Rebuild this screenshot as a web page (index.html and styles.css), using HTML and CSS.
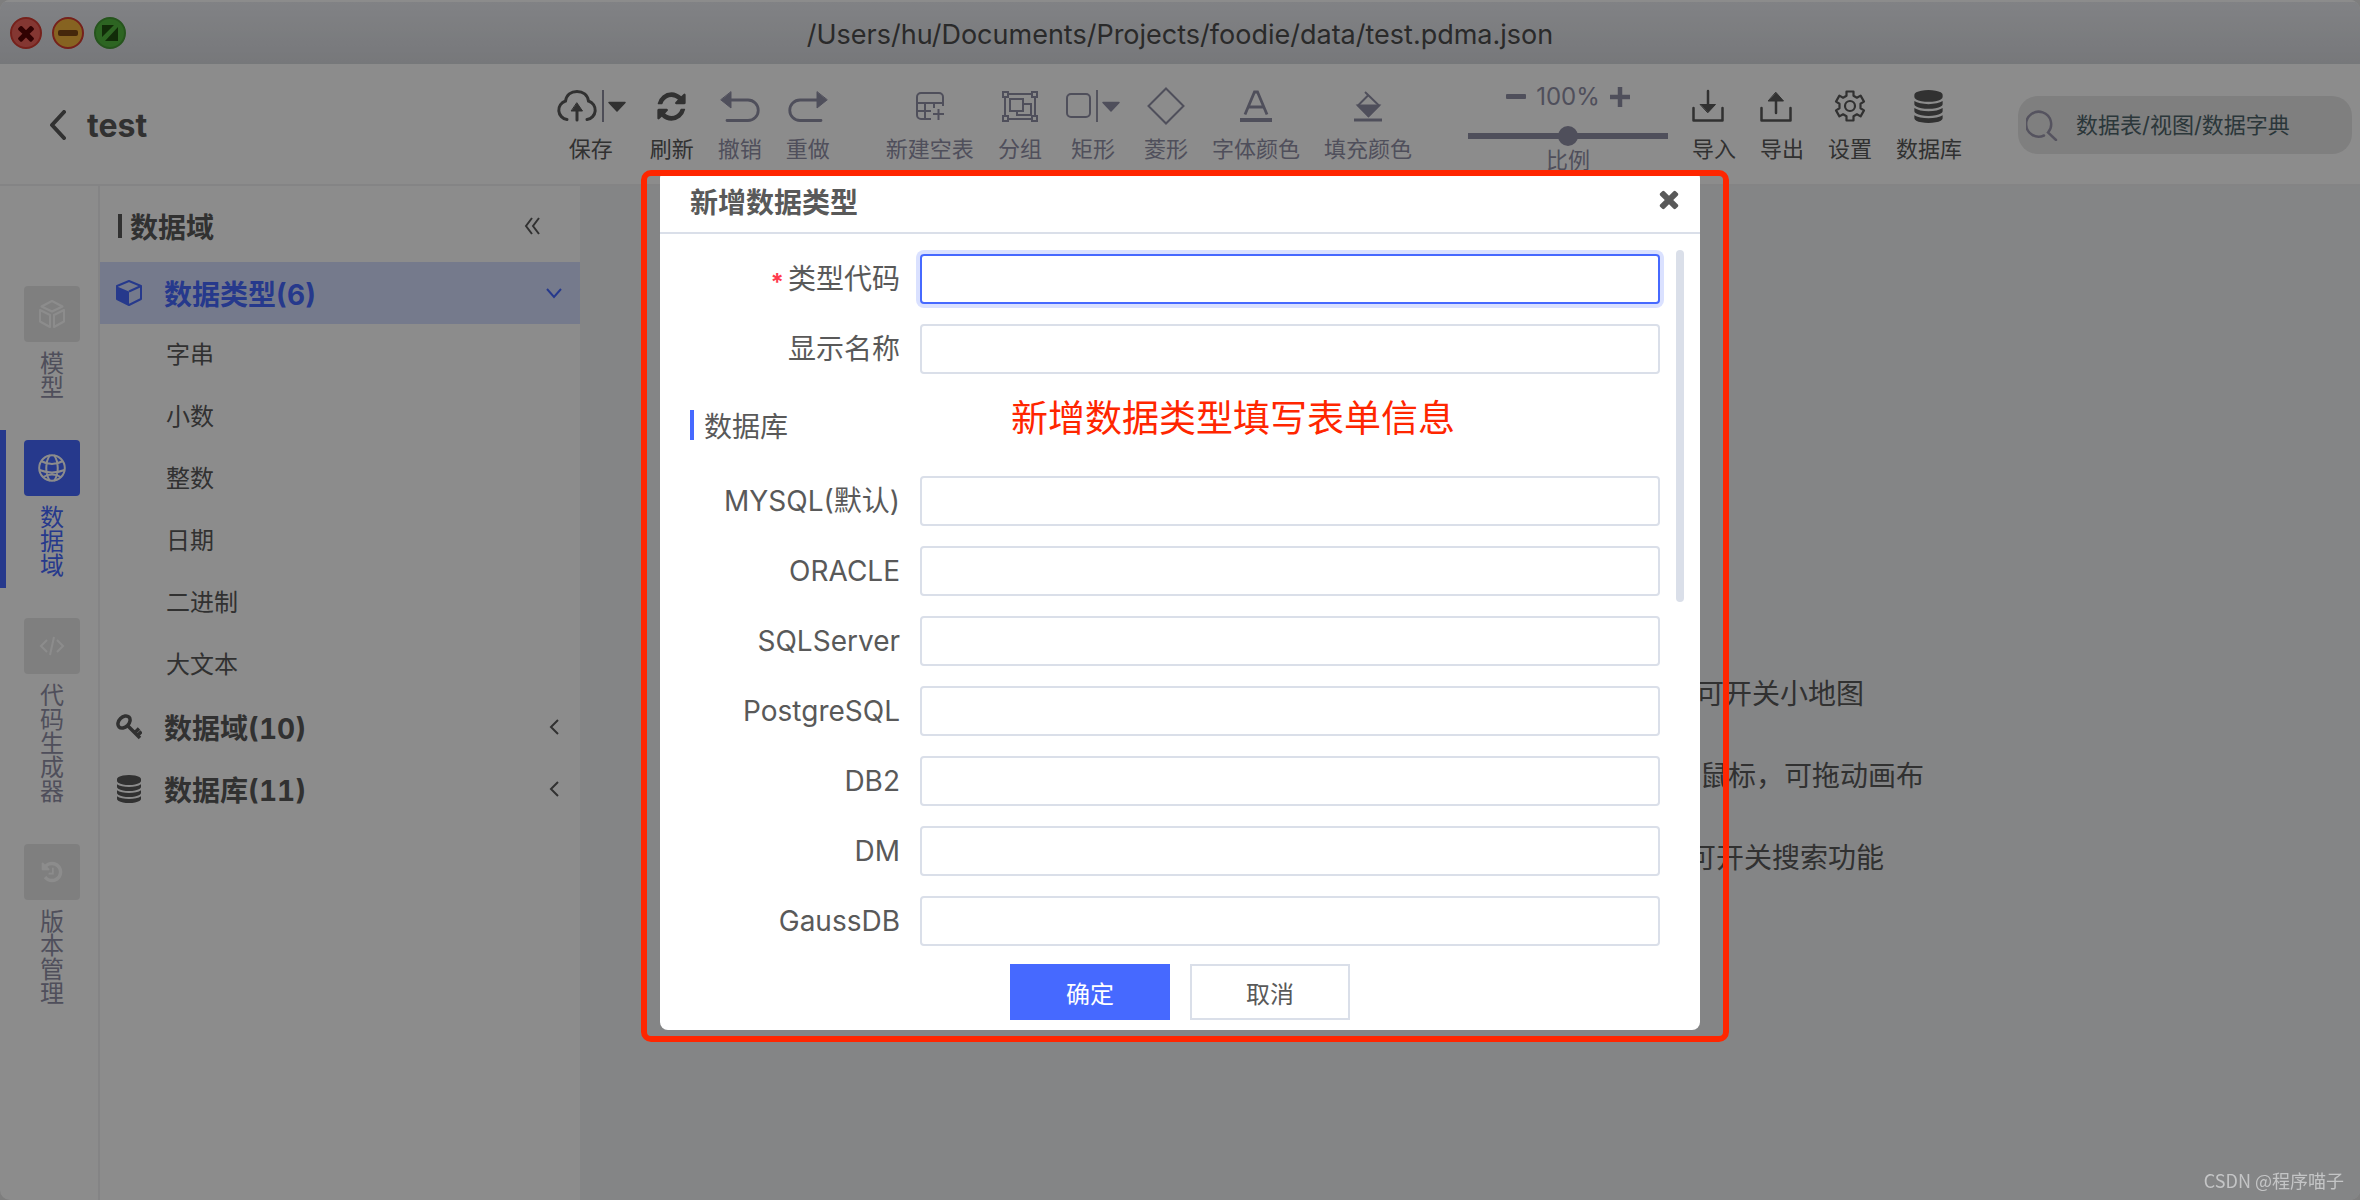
FILE: index.html
```html
<!DOCTYPE html>
<html lang="zh-CN">
<head>
<meta charset="utf-8">
<title>test - 数据域</title>
<link rel="stylesheet" href="styles.css">
</head>
<body>
<svg class="sprite" aria-hidden="true">
  <symbol id="i-db" viewBox="0 0 1792 1792"><path fill="currentColor" d="M896 768q237 0 443-43t325-127v170q0 69-103 128t-280 93.5-385 34.5-385-34.5-280-93.5-103-128v-170q119 84 325 127t443 43zm0 768q237 0 443-43t325-127v170q0 69-103 128t-280 93.5-385 34.5-385-34.5-280-93.5-103-128v-170q119 84 325 127t443 43zm0-384q237 0 443-43t325-127v170q0 69-103 128t-280 93.5-385 34.5-385-34.5-280-93.5-103-128v-170q119 84 325 127t443 43zm0-1152q208 0 385 34.5t280 93.5 103 128v128q0 69-103 128t-280 93.5-385 34.5-385-34.5-280-93.5-103-128v-128q0-69 103-128t280-93.5 385-34.5z"/></symbol>
  <symbol id="i-close" viewBox="0 0 1792 1792"><path fill="currentColor" d="M1490 1322q0 40-28 68l-136 136q-28 28-68 28t-68-28l-294-294-294 294q-28 28-68 28t-68-28l-136-136q-28-28-28-68t28-68l294-294-294-294q-28-28-28-68t28-68l136-136q28-28 68-28t68 28l294 294 294-294q28-28 68-28t68 28l136 136q28 28 28 68t-28 68l-294 294 294 294q28 28 28 68z"/></symbol>
</svg>

<div class="window">
  <header class="titlebar">
    <div class="lights">
      <button class="light light-close" aria-label="关闭窗口"><svg width="24" height="24"><use href="#i-close"/></svg></button>
      <button class="light light-min" aria-label="最小化"><svg width="20" height="6"><rect width="20" height="6" rx="2" fill="currentColor"/></svg></button>
      <button class="light light-max" aria-label="全屏"><svg width="16" height="16" viewBox="0 0 16 16" fill="currentColor"><path d="M0 0h12L0 12zM16 2v14H3z"/></svg></button>
    </div>
    <h1 class="path">/Users/hu/Documents/Projects/foodie/data/test.pdma.json</h1>
  </header>

  <div class="topbar">
    <div class="brand">
      <button class="back" aria-label="返回"><svg width="18" height="30" viewBox="0 0 18 30" fill="none" stroke="currentColor" stroke-width="4" stroke-linecap="round" stroke-linejoin="round"><path d="M15 2L3 15l12 13"/></svg></button>
      <h2 class="project">test</h2>
    </div>
    <nav class="toolbar">
      <button class="tool"><span class="tool-icon"><svg width="70" height="36" viewBox="0 0 70 36" fill="none" stroke="currentColor" stroke-width="3" stroke-linecap="round"><path d="M11 31.500A9.500 9.500 0 0 1 9.500 13C10.500 7 15 3.500 21 3.500S31.500 7 32.500 13A9.500 9.500 0 0 1 31 31.500"/><path d="M21 32V21"/><path d="M21 15l5.500 8h-11z" fill="currentColor" stroke-width="1"/><path d="M47 2v32" stroke="#8c8c9e" stroke-width="2" stroke-linecap="butt"/><path d="M53 14.500h16L61 23z" fill="currentColor" stroke-width="1.500" stroke-linejoin="round"/></svg></span><span>保存</span></button>
      <button class="tool"><span class="tool-icon"><svg width="33" height="33" viewBox="0 0 1792 1792"><path fill="currentColor" d="M1639 1056q0 5-1 7-64 268-268 434.500t-478 166.500q-146 0-282.500-55t-243.500-157l-129 129q-19 19-45 19t-45-19-19-45v-448q0-26 19-45t45-19h448q26 0 45 19t19 45-19 45l-137 137q71 66 161 102t187 36q134 0 250-65t186-179q11-17 53-117 8-23 30-23h192q13 0 22.500 9.500t9.500 22.500zm25-800v448q0 26-19 45t-45 19h-448q-26 0-45-19t-19-45 19-45l138-138q-148-137-349-137-134 0-250 65t-186 179q-11 17-53 117-8 23-30 23h-199q-13 0-22.500-9.500t-9.500-22.500v-7q65-268 270-434.500t480-166.500q146 0 284 55.500t245 156.500l130-129q19-19 45-19t45 19 19 45z"/></svg></span><span>刷新</span></button>
      <button class="tool muted"><span class="tool-icon"><svg width="40" height="34" viewBox="0 0 40 34" fill="none" stroke="currentColor" stroke-width="2.800" stroke-linecap="round"><path d="M9 11h19a10.200 10.200 0 0 1 0 20.500H7"/><path d="M11 3v16L1 11z" fill="currentColor" stroke-width="1"/></svg></span><span>撤销</span></button>
      <button class="tool muted"><span class="tool-icon"><svg width="40" height="34" viewBox="0 0 40 34" fill="none" stroke="currentColor" stroke-width="2.800" stroke-linecap="round"><path d="M31 11H12a10.200 10.200 0 0 0 0 20.500h21"/><path d="M29 3v16l10-8z" fill="currentColor" stroke-width="1"/></svg></span><span>重做</span></button>
      <button class="tool muted group-start"><span class="tool-icon"><svg width="28" height="28" viewBox="0 0 28 28" fill="none" stroke="currentColor" stroke-width="2"><path d="M27 14V5a4 4 0 0 0-4-4H5a4 4 0 0 0-4 4v18a4 4 0 0 0 4 4h10M1 11h26M1 19h14M9 11v16M18 11v5M17 22h11M22.500 17v11"/></svg></span><span>新建空表</span></button>
      <button class="tool muted"><span class="tool-icon"><svg width="38" height="34" viewBox="0 0 38 34" fill="none" stroke="currentColor" stroke-width="2"><path d="M7 5h24M7 30h24M4 8v19M34 8v19"/><path d="M2 3h5v5H2zM31 3h5v5h-5zM2 27h5v5H2zM31 27h5v5h-5zM9 10h13v12H9zM22 15h8v11H16v-4"/></svg></span><span>分组</span></button>
      <button class="tool muted"><span class="tool-icon"><svg width="54" height="34" viewBox="0 0 54 34" fill="none" stroke="currentColor"><rect x="1" y="5" width="23" height="23" rx="4" stroke-width="2"/><path d="M31 1v32" stroke="#9a9aac" stroke-width="2"/><path d="M37 13.500h16L45 22z" fill="currentColor" stroke-width="1.500" stroke-linejoin="round"/></svg></span><span>矩形</span></button>
      <button class="tool muted"><span class="tool-icon"><svg width="38" height="38" viewBox="0 0 38 38" fill="none" stroke="currentColor" stroke-width="2"><path d="M19 1.500L36.500 19 19 36.500 1.500 19z"/></svg></span><span>菱形</span></button>
      <button class="tool muted"><span class="tool-icon"><svg width="32" height="32" viewBox="0 0 32 32" fill="none" stroke="currentColor" stroke-width="2.800"><path d="M5 24.500L14.500 2h3L27 24.500M8.500 17h15"/><path d="M0 30h32" stroke-width="4"/></svg></span><span>字体颜色</span></button>
      <button class="tool muted"><span class="tool-icon"><svg width="28" height="32" viewBox="0 0 28 32" fill="none" stroke="currentColor" stroke-width="2"><path d="M11 2l14 13.500L14.500 26 4 15.500 14.500 5"/><path d="M4 15.500h21L14.500 26z" fill="currentColor"/><path d="M0 30h28" stroke-width="3"/></svg></span><span>填充颜色</span></button>
      <div class="zoom muted group-start">
        <div class="zoom-row">
          <button aria-label="缩小"><svg width="20" height="20" viewBox="0 0 20 20"><rect x="0" y="7" width="20" height="5" rx="1" fill="currentColor"/></svg></button>
          <span>100%</span>
          <button aria-label="放大"><svg width="20" height="20" viewBox="0 0 20 20"><path d="M8 0h4v8h8v4h-8v8H8v-8H0V8h8z" fill="currentColor" stroke="currentColor" stroke-width="0.500"/></svg></button>
        </div>
        <input id="zoom-range" class="zoom-range" type="range" min="0" max="200" value="100">
        <label for="zoom-range">比例</label>
      </div>
      <button class="tool"><span class="tool-icon"><svg width="44" height="34" viewBox="0 0 44 34" fill="none" stroke="currentColor" stroke-width="2.500" stroke-linecap="round" stroke-linejoin="round"><path d="M1.500 19v12.500h29V19M16 2v14"/><path d="M8.500 15.500h15L16 23.500z" fill="currentColor" stroke-width="1"/></svg></span><span>导入</span></button>
      <button class="tool"><span class="tool-icon"><svg width="44" height="34" viewBox="0 0 44 34" fill="none" stroke="currentColor" stroke-width="2.500" stroke-linecap="round" stroke-linejoin="round"><path d="M1.500 19v12.500h29V19M16 24V10"/><path d="M8.500 12h15L16 3.500z" fill="currentColor" stroke-width="1"/></svg></span><span>导出</span></button>
      <button class="tool"><span class="tool-icon"><svg width="32" height="32" viewBox="0 0 32 32" fill="none" stroke="currentColor" stroke-width="2.200" stroke-linejoin="round"><path d="M12.500 1.500h7v4.200l3.400 2 3.700-2.100 3.400 6-3.500 2.100v4.600l3.500 2.100-3.400 6-3.700-2.100-3.400 2v4.200h-7v-4.200l-3.400-2-3.700 2.100-3.400-6 3.500-2.100v-4.600L2 11.600l3.400-6 3.700 2.100 3.400-2z"/><circle cx="16" cy="16" r="5"/></svg></span><span>设置</span></button>
      <button class="tool"><span class="tool-icon"><svg width="33" height="33"><use href="#i-db"/></svg></span><span>数据库</span></button>
    </nav>
    <label class="search">
      <svg width="32" height="32" viewBox="0 0 32 32" fill="none" stroke="currentColor" stroke-width="2.500" stroke-linecap="round"><path d="M18 26.500A12.500 12.500 0 1 1 22 23.500L30 31"/></svg>
      <input type="text" placeholder="数据表/视图/数据字典" aria-label="搜索">
    </label>
  </div>

  <div class="workspace">
    <nav class="rail">
      <a class="rail-item" href="#model"><span class="rail-icon"><svg width="28" height="30" viewBox="0 0 28 30" fill="none" stroke="currentColor" stroke-width="2" stroke-linejoin="round"><path d="M14 2l10.500 5.500L14 12.500 3.500 7.500zM2 11l10 5v12L2 22.500zM26 11l-10 5v12l10-5.500z"/></svg></span><span class="rail-text">模型</span></a>
      <a class="rail-item active" href="#domain"><span class="rail-icon"><svg width="28" height="28" viewBox="0 0 28 28" fill="none" stroke="currentColor" stroke-width="2"><circle cx="14" cy="14" r="12.800"/><path d="M12 1C7 8 7 20 12 27M16 1c5 7 5 19 0 26M3 7q11 6 22 0M1.500 16q12.500 5 25 0M5 23q9-5 18 0"/></svg></span><span class="rail-text">数据域</span></a>
      <a class="rail-item" href="#code"><span class="rail-icon"><svg width="26" height="20" viewBox="0 0 26 20" fill="none" stroke="currentColor" stroke-width="2"><path d="M8 4L2 10l6 6M18 4l6 6-6 6M15 1l-4 18"/></svg></span><span class="rail-text">代码生成器</span></a>
      <a class="rail-item" href="#version"><span class="rail-icon"><svg width="24" height="24" viewBox="0 0 1792 1792"><path fill="currentColor" d="M1664 896q0 156-61 298t-164 245-245 164-298 61q-172 0-327-72.500t-264-204.500q-7-10-6.500-22.500t8.500-20.500l137-138q10-9 25-9 16 2 23 12 73 95 179 147t225 52q104 0 198.500-40.500t163.500-109.500 109.500-163.500 40.500-198.500-40.500-198.500-109.500-163.500-163.500-109.500-198.500-40.500q-98 0-188 35.500t-160 101.500l137 138q31 30 14 69-17 40-59 40h-448q-26 0-45-19t-19-45v-448q0-42 40-59 39-17 69 14l130 129q107-101 244.500-156.500t284.500-55.500q156 0 298 61t245 164 164 245 61 298zm-640-288v448q0 14-9 23t-23 9h-320q-14 0-23-9t-9-23v-64q0-14 9-23t23-9h224v-352q0-14 9-23t23-9h64q14 0 23 9t9 23z"/></svg></span><span class="rail-text">版本管理</span></a>
    </nav>

    <aside class="panel">
      <div class="panel-head">
        <h3 class="panel-title">数据域</h3>
        <button aria-label="收起"><svg width="16" height="18" viewBox="0 0 16 18" fill="none" stroke="currentColor" stroke-width="2"><path d="M8 1L2 9l6 8M15 1L9 9l6 8"/></svg></button>
      </div>
      <button class="node selected">
        <svg class="node-icon" viewBox="0 0 26 26"><path d="M13 1l12 5v13l-12 6-12-6V6z" fill="none" stroke="currentColor" stroke-width="2" stroke-linejoin="round"/><path d="M1 6.500l12 5V25L1 19z" fill="currentColor"/><path d="M13 11.500L25 6" stroke="currentColor" stroke-width="2"/></svg>
        <span>数据类型(6)</span>
        <svg class="node-arrow" viewBox="0 0 16 16" fill="none" stroke="currentColor" stroke-width="2"><path d="M1 4l7 8 7-8"/></svg>
      </button>
      <ul class="leaves">
        <li>字串</li><li>小数</li><li>整数</li><li>日期</li><li>二进制</li><li>大文本</li>
      </ul>
      <button class="node">
        <svg class="node-icon" viewBox="0 0 26 26" fill="none" stroke="currentColor"><ellipse cx="8" cy="8" rx="7" ry="5" transform="rotate(-45 8 8)" stroke-width="3.500"/><path d="M11.500 11.500L24 24M19 18.500l4-4M21.500 21.500l4-4" stroke-width="3.500"/></svg>
        <span>数据域(10)</span>
        <svg class="node-arrow" viewBox="0 0 16 16" fill="none" stroke="currentColor" stroke-width="2"><path d="M12 1L5 8l7 7"/></svg>
      </button>
      <button class="node">
        <svg class="node-icon" viewBox="128 0 1536 1792"><use href="#i-db" width="1792" height="1792"/></svg>
        <span>数据库(11)</span>
        <svg class="node-arrow" viewBox="0 0 16 16" fill="none" stroke="currentColor" stroke-width="2"><path d="M12 1L5 8l7 7"/></svg>
      </button>
    </aside>

    <main class="canvas">
      <p class="hint hint-map">可开关小地图</p>
      <p class="hint hint-drag">鼠标，可拖动画布</p>
      <p class="hint hint-search">可开关搜索功能</p>
    </main>
  </div>
</div>

<div class="mask">
  <div class="modal-wrap">
    <form class="modal" role="dialog" aria-labelledby="modal-title">
      <div class="modal-head">
        <h2 id="modal-title">新增数据类型</h2>
        <button type="button" class="modal-close" aria-label="关闭"><svg width="28" height="28"><use href="#i-close"/></svg></button>
      </div>
      <div class="modal-body">
        <div class="fields">
          <div class="field"><label for="f-code"><span class="req">*</span>类型代码</label><input id="f-code" class="focused" type="text"></div>
          <div class="field"><label for="f-name">显示名称</label><input id="f-name" type="text"></div>
          <h3 class="section">数据库</h3>
          <div class="field"><label for="f-mysql">MYSQL(默认)</label><input id="f-mysql" type="text"></div>
          <div class="field"><label for="f-oracle">ORACLE</label><input id="f-oracle" type="text"></div>
          <div class="field"><label for="f-sqlserver">SQLServer</label><input id="f-sqlserver" type="text"></div>
          <div class="field"><label for="f-pg">PostgreSQL</label><input id="f-pg" type="text"></div>
          <div class="field"><label for="f-db2">DB2</label><input id="f-db2" type="text"></div>
          <div class="field"><label for="f-dm">DM</label><input id="f-dm" type="text"></div>
          <div class="field"><label for="f-gauss">GaussDB</label><input id="f-gauss" type="text"></div>
        </div>
        <div class="scroll-thumb"></div>
      </div>
      <div class="modal-foot">
        <button type="button" class="btn primary">确定</button>
        <button type="button" class="btn">取消</button>
      </div>
    </form>
    <div class="callout"></div>
    <p class="callout-text">新增数据类型填写表单信息</p>
  </div>
</div>
<p class="watermark">CSDN @程序喵子</p>
</body>
</html>
```
FILE: styles.css
```css
:root {
  --text: #595959;
  --muted: #9190a7;
  --blue: #4669ff;
  --line: #dadfe9;
  --red: #ff2600;
}

* { box-sizing: border-box; }

body {
  margin: 0;
  background: #e6e6e6;
  color: var(--text);
  font-family: Inter, "Noto Sans CJK SC", sans-serif;
  font-size: 24px;
}

h1, h2, h3, p, ul { margin: 0; padding: 0; font-weight: 400; }
button, input { font: inherit; color: inherit; }
button { padding: 0; border: 0; background: none; }
svg { display: block; flex: none; }
.sprite { position: absolute; width: 0; height: 0; }

.window {
  display: flex;
  flex-direction: column;
  min-height: 100vh;
  border-radius: 10px;
  overflow: hidden;
  background: #fff;
}

/* title bar */
.titlebar {
  display: grid;
  grid-template-columns: 1fr auto 1fr;
  align-items: center;
  height: 64px;
  padding: 0 10px;
  background: linear-gradient(#ebedf2, #d8dadf);
  border-top: 2px solid #fff;
}
.lights { display: flex; gap: 10px; }
.light {
  display: grid;
  place-items: center;
  width: 32px;
  height: 32px;
  border: 2px solid;
  border-radius: 50%;
}
.light svg { color: var(--glyph); }
.light-close { background: #f0645c; border-color: #d63c32; --glyph: #5a0505; }
.light-min { background: #f5b53c; border-color: #d63c32; --glyph: #7e4714; }
.light-max { background: #52b83e; border-color: #459a35; --glyph: #1f5010; }
.path { padding-top: 2px; font-size: 27px; color: #4d4d4d; }

/* tool bar */
.topbar {
  display: flex;
  height: 122px;
  padding: 20px 8px 0 49px;
  border-bottom: 2px solid #f0f0f3;
}
.brand { display: flex; align-items: center; gap: 20px; height: 82px; }
.project { font-size: 32px; font-weight: 700; }
.toolbar { display: flex; align-items: flex-start; margin-left: auto; font-size: 22px; }
.tool {
  display: flex;
  flex-direction: column;
  align-items: center;
  gap: 5px;
  padding: 0 12px;
  line-height: 32px;
  white-space: nowrap;
}
.tool-icon { display: flex; align-items: center; height: 44px; }
.muted { color: var(--muted); }
.group-start { margin-left: 32px; }
.zoom { display: flex; flex-direction: column; align-items: center; width: 224px; line-height: 28px; }
.zoom-row {
  display: flex;
  align-items: center;
  gap: 10px;
  height: 26px;
  margin-bottom: 16px;
  font-size: 24px;
}
.zoom-range {
  width: 200px;
  height: 20px;
  margin: 0;
  appearance: none;
  background: linear-gradient(currentColor, currentColor) center / 100% 6px no-repeat;
}
.zoom-range::-webkit-slider-thumb {
  appearance: none;
  width: 20px;
  height: 20px;
  border-radius: 50%;
  background: var(--muted);
}
.search {
  display: flex;
  align-items: center;
  gap: 18px;
  width: 334px;
  height: 58px;
  margin: 12px 0 0 44px;
  padding: 0 8px;
  border-radius: 20px;
  background: #e8e8e8;
  color: #9c98ad;
  font-size: 22px;
}
.search input { flex: 1; min-width: 0; padding: 0; border: 0; background: none; outline: 0; }
.search input::placeholder { color: #4f646b; opacity: 1; }

/* left rail */
.workspace { display: flex; flex: 1; }
.rail {
  display: flex;
  flex-direction: column;
  gap: 20px;
  width: 100px;
  padding-top: 90px;
  border-right: 2px solid #f0f0f3;
}
.rail-item {
  display: flex;
  flex-direction: column;
  align-items: center;
  gap: 10px;
  padding: 10px 0;
  border-left: 6px solid transparent;
  color: var(--muted);
  text-decoration: none;
}
.rail-icon {
  display: grid;
  place-items: center;
  width: 56px;
  height: 56px;
  border-radius: 4px;
  background: #e8e8e8;
  color: #fff;
}
.rail-text { width: 24px; line-height: 24px; word-break: break-all; }
.rail-item.active { border-color: var(--blue); color: var(--blue); }
.rail-item.active .rail-icon { background: var(--blue); }

/* tree panel */
.panel { width: 480px; }
.panel-head {
  display: flex;
  align-items: center;
  justify-content: space-between;
  height: 76px;
  padding: 4px 40px 0 18px;
}
.panel-title {
  display: flex;
  align-items: center;
  gap: 8px;
  font-size: 28px;
  font-weight: 700;
}
.panel-title::before { content: ""; width: 4px; height: 24px; background: currentColor; }
.node {
  display: flex;
  align-items: center;
  width: 100%;
  height: 62px;
  padding: 0 18px 0 16px;
  gap: 22px;
  font-size: 28px;
  font-variant-numeric: tabular-nums;
  font-weight: 700;
}
.node.selected { background: #d6dfff; color: var(--blue); }
.node-icon { width: 26px; height: 28px; }
.node-arrow { width: 16px; height: 16px; margin-left: auto; }
.leaves { list-style: none; }
.leaves li { height: 62px; padding-left: 66px; line-height: 62px; }

/* canvas */
.canvas {
  display: flex;
  flex: 1;
  flex-direction: column;
  align-items: center;
  padding-top: 467px;
  background: #f0f2f5;
}
.hint { line-height: 82px; font-size: 28px; text-align: right; }
.hint-map { width: 788px; }
.hint-drag { width: 908px; }
.hint-search { width: 828px; }

/* dialog */
.mask {
  position: fixed;
  inset: 0;
  display: grid;
  place-items: center;
  background: rgba(0, 0, 0, .45);
}
.modal-wrap { position: relative; width: 1040px; }
.modal { padding-bottom: 10px; border-radius: 8px; background: #fff; }
.modal-head {
  display: flex;
  align-items: center;
  justify-content: space-between;
  height: 64px;
  padding: 0 17px 0 30px;
  border-bottom: 2px solid var(--line);
}
.modal-head h2 { font-size: 28px; font-weight: 700; }
.modal-close { padding-bottom: 4px; }
.modal-body { display: flex; gap: 16px; padding: 16px 16px 18px 30px; }
.fields { display: flex; flex: 1; flex-direction: column; gap: 20px; padding-top: 4px; }
.field { display: flex; align-items: center; gap: 20px; }
.field label {
  display: flex;
  align-items: center;
  justify-content: flex-end;
  gap: 4px;
  width: 210px;
  font-size: 28px;
  line-height: 50px;
}
.req { padding-top: 8px; color: #ff3b4e; font-size: 24px; font-weight: 700; line-height: 32px; }
.field input {
  flex: 1;
  height: 50px;
  padding: 0 12px;
  border: 2px solid var(--line);
  border-radius: 4px;
  outline: 0;
}
.field input.focused { border-color: var(--blue); box-shadow: 0 0 0 4px #dae1ff; }
.section {
  display: flex;
  align-items: center;
  height: 30px;
  margin: 16px 0;
  padding-left: 10px;
  border-left: 4px solid var(--blue);
  font-size: 28px;
}
.scroll-thumb { width: 8px; height: 352px; border-radius: 4px; background: var(--line); }
.modal-foot { display: flex; justify-content: center; gap: 20px; }
.btn { width: 160px; height: 56px; border: 2px solid var(--line); }
.btn.primary { border-color: var(--blue); background: var(--blue); color: #fff; }

/* red call-out over the dialog */
.callout {
  position: absolute;
  inset: 0 -29px -12px -19px;
  border: 6px solid var(--red);
  border-radius: 10px;
  pointer-events: none;
}
.callout-text {
  position: absolute;
  top: 224px;
  left: 351px;
  color: var(--red);
  font-size: 37px;
  line-height: 50px;
  white-space: nowrap;
}
.watermark {
  position: fixed;
  right: 16px;
  bottom: 6px;
  color: #c4c5c6;
  font-family: "Noto Sans CJK SC", sans-serif;
  font-size: 18px;
  line-height: 28px;
}
```
